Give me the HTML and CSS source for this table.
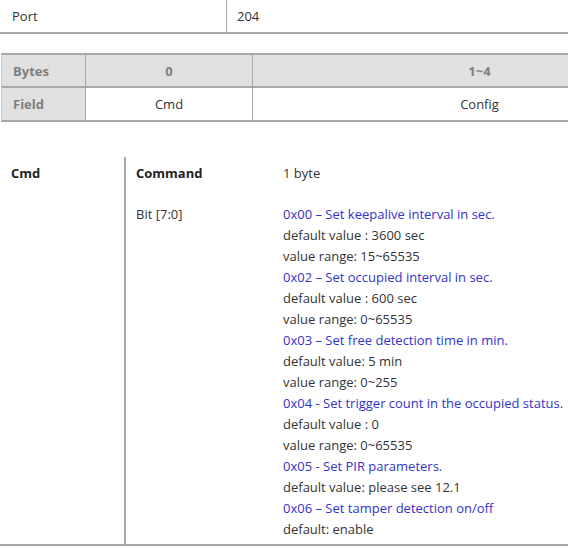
FILE: index.html
```html
<!DOCTYPE html>
<html>
<head>
<meta charset="utf-8">
<link rel="stylesheet" href="styles.css">
</head>
<body>
<div class="port-table">
  <div class="cell port-label">Port</div>
  <div class="cell port-value">204</div>
</div>

<div class="bytes-table">
  <div class="brow head">
    <div class="bcell label">Bytes</div>
    <div class="bcell c0">0</div>
    <div class="bcell c1">1~4</div>
  </div>
  <div class="brow">
    <div class="bcell label">Field</div>
    <div class="bcell c0 val">Cmd</div>
    <div class="bcell c1 val">Config</div>
  </div>
</div>

<div class="cmd-table">
  <div class="cmd-name">Cmd</div>
  <div class="cmd-body">
    <div class="crow first">
      <div class="ckey bold">Command</div>
      <div class="cval">1 byte</div>
    </div>
    <div class="crow">
      <div class="ckey">Bit [7:0]</div>
      <div class="cval lines">
        <div class="blue">0x00 – Set keepalive interval in sec.</div>
        <div>default value : 3600 sec</div>
        <div>value range: 15~65535</div>
        <div class="blue">0x02 – Set occupied interval in sec.</div>
        <div>default value : 600 sec</div>
        <div>value range: 0~65535</div>
        <div class="blue">0x03 – Set free detection time in min.</div>
        <div>default value: 5 min</div>
        <div>value range: 0~255</div>
        <div class="blue">0x04 - Set trigger count in the occupied status.</div>
        <div>default value : 0</div>
        <div>value range: 0~65535</div>
        <div class="blue">0x05 - Set PIR parameters.</div>
        <div>default value: please see 12.1</div>
        <div class="blue">0x06 – Set tamper detection on/off</div>
        <div>default: enable</div>
      </div>
    </div>
  </div>
</div>
</body>
</html>
```

FILE: styles.css
```css
html, body {
  margin: 0;
  padding: 0;
  overflow: hidden;
  background: #ffffff;
}
body {
  font-family: "Open Sans", "Noto Sans", sans-serif;
  font-size: 13px;
  color: #333333;
  width: 568px;
}

.port-table {
  display: grid;
  grid-template-columns: 227px 1fr;
  height: 32px;
  border-bottom: 2px solid #a8a8a8;
}
.port-table .cell {
  display: flex;
  align-items: center;
  padding-left: 12px;
}
.port-label {
  border-right: 1px solid #a8a8a8;
}
.port-value {
  padding-left: 10px !important;
}

.bytes-table {
  margin-top: 19px;
  margin-left: 1px;
  border-top: 2px solid #a8a8a8;
  border-bottom: 2px solid #a8a8a8;
  border-left: 1px solid #c8c8c8;
}
.brow {
  display: grid;
  grid-template-columns: 84px 167px 1fr;
  height: 31px;
}
.brow + .brow {
  border-top: 2px solid #a8a8a8;
  height: 32px;
}
.brow.head {
  background: #e0e0e0;
}
.bcell {
  display: flex;
  align-items: center;
  justify-content: center;
  font-weight: bold;
  color: #7f7f7f;
}
.bcell.label {
  justify-content: flex-start;
  padding-left: 11px;
  background: #e0e0e0;
  border-right: 1px solid #a8a8a8;
}
.bcell.c0 {
  border-right: 1px solid #a8a8a8;
}
.bcell.c1 {
  padding-left: 138px;
}
.bcell.val {
  font-weight: normal;
  color: #333333;
}

.cmd-table {
  margin-top: 35px;
  display: grid;
  grid-template-columns: 126px 1fr;
  border-bottom: 2px solid #a8a8a8;
}
.cmd-name {
  font-weight: bold;
  padding: 6px 0 0 11px;
  line-height: 21px;
  border-right: 2px solid #a8a8a8;
  color: #222222;
}
.crow {
  display: grid;
  grid-template-columns: 157px 1fr;
  line-height: 21px;
}
.crow.first {
  padding-top: 6px;
  height: 41px;
}
.crow:not(.first) {
  padding-bottom: 4px;
}
.ckey {
  padding-left: 10px;
}
.ckey.bold {
  font-weight: bold;
  color: #222222;
}
.blue {
  color: #3232cc;
}
```
